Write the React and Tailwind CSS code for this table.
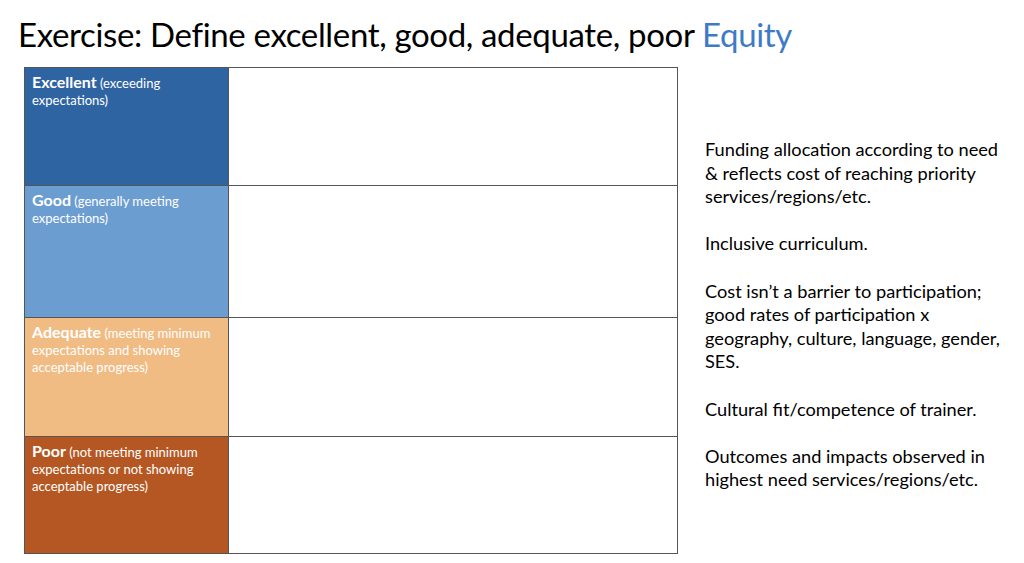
export default function App() {
  const rows = [
    { h: "h-[117px]", bg: "bg-[#2f64a3]", title: "Excellent", sub: "(exceeding expectations)" },
    { h: "h-[132px]", bg: "bg-[#6c9dd0]", title: "Good", sub: "(generally meeting expectations)" },
    { h: "h-[119px]", bg: "bg-[#f1bb84]", title: "Adequate", sub: "(meeting minimum expectations and showing acceptable progress)" },
    { h: "h-[117px]", bg: "bg-[#b55722]", title: "Poor", sub: "(not meeting minimum expectations or not showing acceptable progress)" },
  ];
  return (
    <div className="w-[1024px] h-[563px] bg-white overflow-hidden font-['Lato',sans-serif] text-black">
      <div className="pl-[18px] pt-[14px] h-[67px] text-[33px] leading-[40px] tracking-[-0.35px] whitespace-nowrap">
        Exercise: Define excellent, good, adequate, poor <span className="text-[#3d7bc7]">Equity</span>
      </div>
      <div className="flex">
        <div className="ml-[24px] w-[654px] border border-[#555] flex flex-col">
          {rows.map((r, i) => (
            <div key={i} className={`flex ${r.h} ${i > 0 ? "border-t border-[#555]" : ""}`}>
              <div className={`w-[204px] ${r.bg} border-r border-[#555] pl-[7px] pr-[4px] pt-[5px] text-white text-[13px] leading-[17px]`}>
                <span className="font-bold text-[16px] leading-[17px]">{r.title}</span> {r.sub}
              </div>
              <div className="flex-1 bg-white"></div>
            </div>
          ))}
        </div>
        <div className="ml-[27px] pt-[71px] w-[306px] text-[18.2px] leading-[23.6px]">
          <p>Funding allocation according to need &amp; reflects cost of reaching priority services/regions/etc.</p>
          <p className="mt-[23.6px]">Inclusive curriculum.</p>
          <p className="mt-[23.6px]">Cost isn’t a barrier to participation; good rates of participation x geography, culture, language, gender, SES.</p>
          <p className="mt-[23.6px]">Cultural fit/competence of trainer.</p>
          <p className="mt-[23.6px]">Outcomes and impacts observed in highest need services/regions/etc.</p>
        </div>
      </div>
    </div>
  );
}
